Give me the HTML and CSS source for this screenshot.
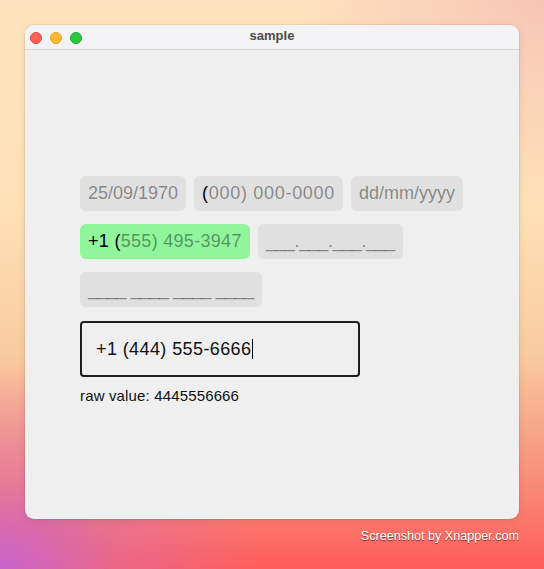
FILE: index.html
```html
<!DOCTYPE html>
<html>
<head>
<meta charset="utf-8">
<link rel="stylesheet" href="styles.css">
</head>
<body>
<div class="stage">
  <div class="window">
    <div class="titlebar">
      <div class="lights">
        <span class="light red"></span>
        <span class="light yellow"></span>
        <span class="light green"></span>
      </div>
      <div class="title">sample</div>
    </div>
    <div class="content">
      <div class="row">
        <div class="field">25/09/1970</div>
        <div class="field wide"><span class="typed">(</span>000) 000-0000</div>
        <div class="field">dd/mm/yyyy</div>
      </div>
      <div class="row">
        <div class="field ok"><span class="typed">+1 (</span>555) 495-3947</div>
        <div class="field tight">___.___.___.___</div>
      </div>
      <div class="row">
        <div class="field tighter">____ ____ ____ ____</div>
      </div>
      <div class="input"><span>+1 (444) 555-6666</span><span class="caret"></span></div>
      <div class="raw">raw value: 4445556666</div>
    </div>
  </div>
  <div class="credit">Screenshot by Xnapper.com</div>
</div>
</body>
</html>
```
FILE: styles.css
```css
html, body {
  margin: 0;
  padding: 0;
}
body {
  width: 544px;
  height: 569px;
  overflow: hidden;
  font-family: "Liberation Sans", Arial, sans-serif;
  background:
    radial-gradient(ellipse 260px 200px at 0% 100%, rgba(196, 100, 210, 0.95) 0%, rgba(215, 110, 180, 0.5) 45%, rgba(230, 120, 160, 0) 100%),
    radial-gradient(ellipse 260px 200px at 100% 0%, rgba(246, 192, 182, 0.85) 0%, rgba(248, 200, 180, 0) 100%),
    linear-gradient(to bottom, #fde3bd 0%, #fde0b4 38%, #f9cba0 62%, #f7947e 82%, #ff5c5a 100%);
}
.stage {
  display: flex;
  flex-direction: column;
  padding: 25px 25px 0 25px;
}
.window {
  width: 494px;
  height: 494px;
  border-radius: 9px;
  overflow: hidden;
  background: #efefef;
  display: flex;
  flex-direction: column;
  box-shadow: 0 0 0 0.5px rgba(0, 0, 0, 0.12), 0 2px 8px rgba(0, 0, 0, 0.08);
}
.titlebar {
  height: 24px;
  flex: none;
  background: #f3f3f5;
  border-bottom: 1px solid #d6d6d6;
  display: flex;
  align-items: center;
  position: relative;
}
.lights {
  display: flex;
  gap: 8px;
  padding-left: 5px;
  padding-top: 1px;
}
.light {
  width: 12px;
  height: 12px;
  border-radius: 50%;
  box-sizing: border-box;
}
.light.red { background: #fe5f57; border: 0.5px solid #e14640; }
.light.yellow { background: #febc2e; border: 0.5px solid #dfa023; }
.light.green { background: #28c840; border: 0.5px solid #1daa2c; }
.title {
  position: absolute;
  left: 0;
  right: 0;
  top: 0;
  line-height: 21px;
  text-align: center;
  font-weight: bold;
  font-size: 13px;
  color: #4c4c4c;
}
.content {
  padding: 126px 0 0 55px;
  display: flex;
  flex-direction: column;
  gap: 13px;
}
.row {
  display: flex;
  gap: 8px;
}
.field {
  height: 35px;
  line-height: 35px;
  padding: 0 8px;
  border-radius: 6px;
  background: #e0e0e0;
  font-size: 18px;
  color: rgba(0, 0, 0, 0.42);
  white-space: pre;
}
.field.wide {
  letter-spacing: 0.7px;
}
.field.ok {
  background: #90f69c;
  letter-spacing: 0.3px;
}
.field.tight {
  letter-spacing: -0.4px;
}
.field.tighter {
  letter-spacing: -0.5px;
}
.typed {
  color: #000;
}
.input {
  margin-top: 1px;
  width: 280px;
  height: 56px;
  box-sizing: border-box;
  border: 2px solid #1e1e1e;
  border-radius: 4px;
  padding: 0 14px;
  display: flex;
  align-items: center;
  font-size: 18px;
  letter-spacing: 0.4px;
  color: #111;
}
.caret {
  width: 1px;
  height: 20px;
  background: #000;
  margin-left: 1px;
}
.raw {
  margin-top: -3px;
  font-size: 15px;
  letter-spacing: 0.15px;
  color: #111;
}
.credit {
  align-self: flex-end;
  margin-top: 10px;
  font-size: 12.6px;
  color: #fff;
  text-shadow: 0 1px 1px rgba(0, 0, 0, 0.55);
}
```
